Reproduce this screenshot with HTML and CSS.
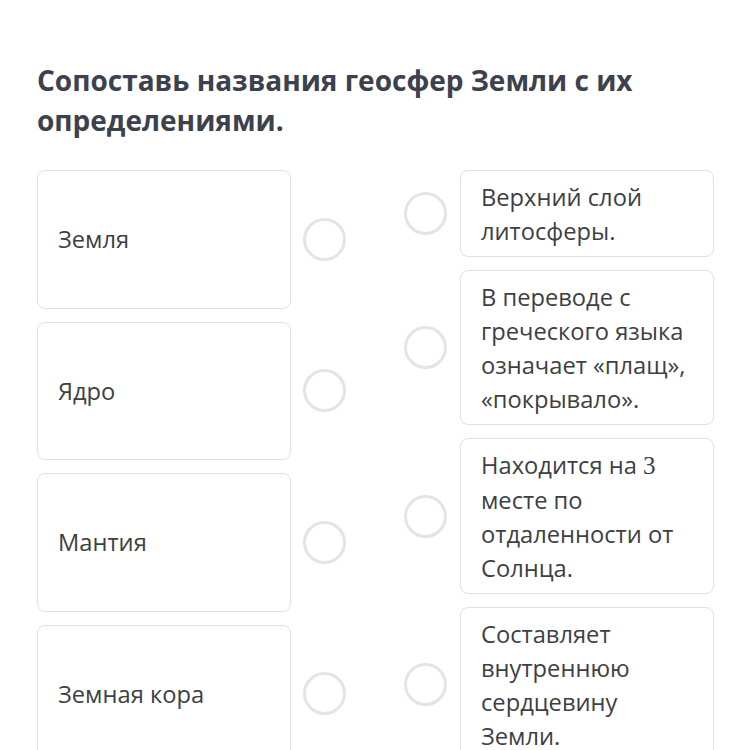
FILE: index.html
```html
<!DOCTYPE html>
<html lang="ru">
<head>
<meta charset="utf-8">
<link rel="stylesheet" href="styles.css">
</head>
<body>
<div class="page">
  <h1 class="title">Сопоставь названия геосфер Земли с их определениями.</h1>
  <div class="board">
    <div class="col left">
      <div class="row lrow"><div class="card lcard">Земля</div><span class="dot"></span></div>
      <div class="row lrow"><div class="card lcard">Ядро</div><span class="dot"></span></div>
      <div class="row lrow"><div class="card lcard">Мантия</div><span class="dot"></span></div>
      <div class="row lrow"><div class="card lcard">Земная кора</div><span class="dot"></span></div>
    </div>
    <div class="col right">
      <div class="row rrow"><span class="dot"></span><div class="card rcard">Верхний слой литосферы.</div></div>
      <div class="row rrow"><span class="dot"></span><div class="card rcard">В переводе с греческого языка означает «плащ», «покрывало».</div></div>
      <div class="row rrow"><span class="dot"></span><div class="card rcard">Находится на <span class="num">3</span> месте по отдаленности от Солнца.</div></div>
      <div class="row rrow"><span class="dot"></span><div class="card rcard">Составляет внутреннюю сердцевину Земли.</div></div>
    </div>
  </div>
</div>
</body>
</html>
```
FILE: styles.css
```css
html, body {
  margin: 0;
  padding: 0;
  background: #ffffff;
}
.page {
  padding: 60px 0 0 37px;
  font-family: "Open Sans", "Noto Sans", sans-serif;
}
.title {
  margin: 0 0 30px 0;
  width: 660px;
  font-size: 28px;
  line-height: 40px;
  font-weight: 700;
  color: #3c424d;
}
.board {
  display: flex;
  gap: 58px;
  align-items: flex-start;
}
.col {
  display: flex;
  flex-direction: column;
  gap: 13px;
}
.left .row {
  gap: 12px;
}
.right .row {
  gap: 13px;
}
.row {
  display: flex;
  align-items: center;
}
.card {
  box-sizing: border-box;
  width: 254px;
  border: 1.5px solid #e1e1e1;
  border-radius: 8px;
  font-size: 23.7px;
  line-height: 34px;
  color: #3d3f44;
  padding: 8.5px 20px;
}
.lcard {
  height: 138.5px;
  display: flex;
  align-items: center;
}
.dot {
  box-sizing: border-box;
  width: 43px;
  height: 43px;
  border-radius: 50%;
  border: 3.5px solid #e0e5eb;
  flex: none;
}
.num {
  font-family: "Liberation Serif", serif;
  font-size: 25px;
}
```
